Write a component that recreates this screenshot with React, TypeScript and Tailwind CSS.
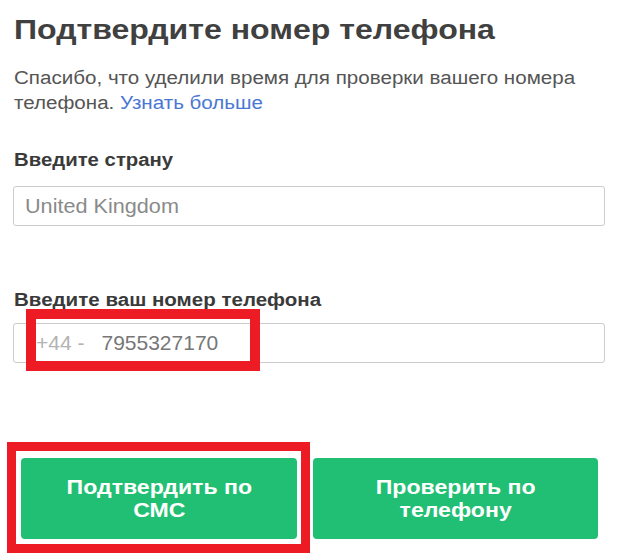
import React from "react";

export default function App() {
  return (
    <div
      className="relative w-[624px] h-[558px] bg-white overflow-hidden pl-[14px] pr-[19px] pt-[13px]"
      style={{ fontFamily: '"Liberation Sans", Arial, sans-serif' }}
    >
      <h1 className="text-[28px] leading-[34px] font-bold text-[#404040] m-0">
        <span className="inline-block origin-left scale-x-[1.145] whitespace-nowrap">
          Подтвердите номер телефона
        </span>
      </h1>
      <p className="mt-[19px] text-[18px] leading-[25px] text-[#555555]">
        <span className="inline-block origin-left scale-x-[1.143] whitespace-nowrap">
          Спасибо, что уделили время для проверки вашего номера
        </span>
        <br />
        <span className="inline-block origin-left scale-x-[1.143] whitespace-nowrap">
          телефона. <span className="text-[#4a77d4]">Узнать больше</span>
        </span>
      </p>

      <div className="mt-[33px] text-[18px] leading-[22px] font-bold text-[#3a3a3a]">
        <span className="inline-block origin-left scale-x-[1.13] whitespace-nowrap">
          Введите страну
        </span>
      </div>
      <div className="mt-[15px] h-[40px] ml-[-1px] border border-[#cccccc] rounded-[3px] flex items-center pl-[11px] text-[21px] text-[#8a8a8a]">
        <span className="inline-block origin-left scale-x-[1.03] whitespace-nowrap">United Kingdom</span>
      </div>

      <div className="mt-[63px] text-[18px] leading-[22px] font-bold text-[#3a3a3a]">
        <span className="inline-block origin-left scale-x-[1.14] whitespace-nowrap">
          Введите ваш номер телефона
        </span>
      </div>
      <div className="mt-[12px] h-[40px] ml-[-1px] border border-[#cccccc] rounded-[3px] flex items-center pl-[22px] text-[21px]">
        <span className="text-[#b3b3b3]">+44 -</span>
        <span className="ml-[17px] text-[#777777]">7955327170</span>
      </div>

      <div className="mt-[95px] ml-[7px] flex gap-[16px]">
        <div className="w-[276px] h-[81px] rounded-[4px] bg-[#21bf73] flex items-center justify-center text-center text-white font-bold text-[21px] leading-[23px]">
          <span className="inline-block scale-x-[1.1] whitespace-nowrap -translate-y-[1px]">
            Подтвердить по
            <br />
            СМС
          </span>
        </div>
        <div className="w-[285px] h-[81px] rounded-[4px] bg-[#21bf73] flex items-center justify-center text-center text-white font-bold text-[21px] leading-[23px]">
          <span className="inline-block scale-x-[1.1] whitespace-nowrap -translate-y-[1px]">
            Проверить по
            <br />
            телефону
          </span>
        </div>
      </div>

      <div className="absolute left-[26px] top-[309px] w-[234px] h-[62px] border-[10px] border-[#ed1c24]" />
      <div className="absolute left-[7px] top-[442px] w-[303px] h-[111px] border-[9px] border-[#ed1c24]" />
    </div>
  );
}
